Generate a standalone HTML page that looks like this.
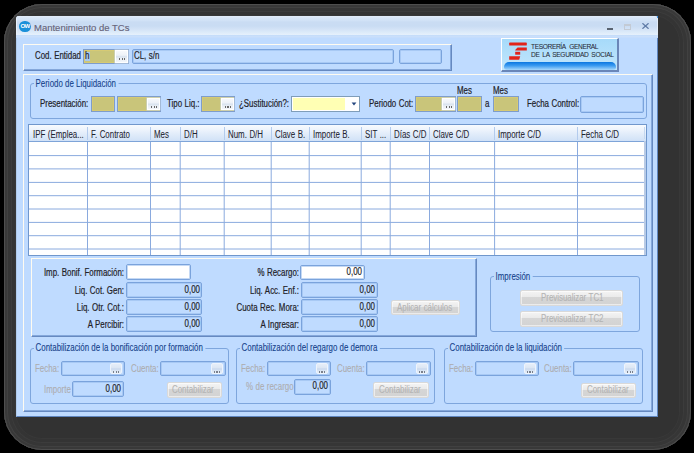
<!DOCTYPE html>
<html><head><meta charset="utf-8"><style>
*{margin:0;padding:0;box-sizing:border-box}
html,body{width:694px;height:453px;overflow:hidden;background:#000}
body{position:relative;font-family:"Liberation Sans",sans-serif;font-size:10px;line-height:11px;color:#222228}
div,span,svg{position:absolute}
.t{white-space:nowrap;word-spacing:0.4px;transform:scaleX(0.79);transform-origin:0 0;-webkit-text-stroke:0.2px currentColor}
.r{text-align:right;transform-origin:100% 0}
.nt{transform:none}
.dis{color:#adadb0;-webkit-text-stroke:0.1px #adadb0}
.gt{color:#15428b;background:#bfdbff;padding:0 3px 0 2px;word-spacing:0;-webkit-text-stroke:0.1px currentColor}
.grp{border:1px solid #7ea6dd;border-radius:3px}
.raised{border-top:1px solid #fffbf0;border-left:1px solid #fffbf0;border-right:1px solid #6689c0;border-bottom:1px solid #6689c0;box-shadow:inset -1px -1px 0 #85a8db}
.kh{background:#c9c57a;border:1px solid #7f9dca;box-shadow:inset 0 0 0 1px #d6ca74}
.fld{border:1px solid #7aa3dc;border-radius:2px;box-shadow:inset 0 0 0 1px rgba(150,185,235,.55)}
.b3{background:linear-gradient(#f7f9fc,#eef2f8 38%,#d8e2ee 52%,#e8eef5 68%,#f3f6fa);border:1px solid #fff;box-shadow:0 0 0 0.5px #c9d6e6}
.b3 i{position:absolute;left:3px;top:7px;width:6px;height:2px;background:repeating-linear-gradient(90deg,#6a6a6a 0 1.2px,transparent 1.2px 2.5px)}
.b3d{background:linear-gradient(#e6eef9,#dde7f4 40%,#cad9ee 55%,#dbe6f4 75%,#e4eefa);border:1px solid #eef4fc;border-radius:2px}
.b3d i{position:absolute;left:2px;top:7px;width:6px;height:2px;background:repeating-linear-gradient(90deg,#7a808c 0 1.3px,transparent 1.3px 2.5px)}
.db{background:linear-gradient(#f4f4f4,#eaeaea 45%,#d6d6d6 46%,#d3d3d3);border:1px solid #d9d9d9;border-radius:2px;color:#b2b2b2;text-align:center;box-shadow:inset 0 0 0 1px rgba(255,255,255,.55)}
.val{text-align:right}
</style></head><body>
<div style="left:4px;top:4px;width:687px;height:446px;border-radius:38px;box-shadow:inset 0 0 0 1px #4e4e4e,inset 0 0 0 3px #393939,inset 0 0 0 4px #414141,inset 0 0 0 7px #363636,inset 0 0 0 8px #3c3c3c,inset 0 0 0 11px #343434,inset 0 0 0 12px #383838;background:#323232"></div>
<div class="" style="left:16px;top:16px;width:642px;height:401px;background:#bfdbff;border-left:1px solid #b0cbed;border-right:1px solid #5f86bf;border-bottom:1px solid #5f86bf;border-radius:3px 3px 0 0"></div>
<div class="" style="left:16px;top:16px;width:642px;height:19px;border-radius:3px 3px 0 0;background:linear-gradient(#e4eefa 0px,#d8e6f8 2px,#d3e3f7 4px,#cadcf3 6px,#c9dcf3 10px,#d2e2f6 13px,#dceaf9 16px,#e6f1fc 19px);border-left:1px solid #e9f1fb;border-right:1px solid #e2ecf8"></div>
<div style="left:16px;top:35px;width:642px;height:3px;background:linear-gradient(#c3dcfa,#cadffb 50%,#c2dcfd)"></div>
<div style="left:657px;top:16px;width:1px;height:2px;background:#3a8ee0"></div>
<div style="left:19px;top:20.5px;width:11.8px;height:11.8px;border-radius:50%;background:#1a90d9"></div>
<div style="left:19px;top:23px;width:12px;font-size:6px;line-height:7px;color:#fff;text-align:center;font-weight:bold;letter-spacing:-0.6px">OW</div>
<div class="t nt" style="left:34px;top:21.5px;font-size:9.5px;line-height:12px;letter-spacing:0;word-spacing:0;color:#66647a;-webkit-text-stroke:0.15px #66647a">Mantenimiento de TCs</div>
<div style="left:607px;top:28px;width:6px;height:2px;background:#5a6472"></div>
<div style="left:624px;top:24px;width:7px;height:6px;border:1px solid #c3cad4;border-top-width:2px"></div>
<svg style="left:642px;top:23px" width="7" height="6" viewBox="0 0 7 6"><path d="M0.4 0.3 L6.6 5.7 M6.6 0.3 L0.4 5.7" stroke="#5f7aa6" stroke-width="1.3"/></svg>
<div class="raised" style="left:23px;top:44px;width:429px;height:27px;"></div>
<div class="t" style="left:35px;top:50px;">Cod. Entidad</div>
<div class="kh" style="left:83px;top:49px;width:46px;height:15px;"></div>
<div style="left:85px;top:52px;width:5px;height:9px;background:#a9c9ee"></div>
<div class="t" style="left:85px;top:50px;">h</div>
<div class="b3" style="left:115px;top:50px;width:13px;height:13px;"><i></i></div>
<div class="fld" style="left:132px;top:49px;width:262px;height:15px;"></div>
<div class="t" style="left:134px;top:50px;">CL, s/n</div>
<div class="fld" style="left:399px;top:49px;width:43px;height:15px;"></div>
<div class="" style="left:501px;top:38px;width:118px;height:34px;background:linear-gradient(#a6dafa,#c2e6fc);border-top:1px solid #fff;border-left:1px solid #fff;border-right:2px solid #6a86b8;border-bottom:2px solid #6a86b8"></div>
<div style="left:504px;top:62px;width:112px;height:8px;border-radius:5px 5px 3px 3px;background:linear-gradient(#0a76e0,#3a9af0 45%,#a8d8fb)"></div>
<svg style="left:508px;top:42px" width="20" height="19" viewBox="0 0 20 19"><rect x="1.2" y="0.6" width="17.6" height="3" rx="0.6" fill="#e2231a"/><path d="M9.6 5.4 H18.8 V8.4 H7.2 V7.9 Z" fill="#e2231a"/><rect x="7.2" y="9.8" width="5" height="2.9" fill="#e2231a"/><path d="M1.2 14.3 H12.2 L11.2 17.8 H1.2Z" fill="#e2231a"/></svg>
<div class="t nt" style="left:531px;top:42.5px;font-size:6.6px;line-height:8px;color:#262a36;letter-spacing:-0.36px;word-spacing:2.2px;-webkit-text-stroke:0.05px #262a36">TESORERÍA GENERAL</div>
<div class="t nt" style="left:531px;top:50.5px;font-size:6.6px;line-height:8px;color:#262a36;letter-spacing:-0.32px;word-spacing:1.3px;-webkit-text-stroke:0.05px #262a36">DE LA SEGURIDAD SOCIAL</div>
<div class="raised" style="left:23px;top:74px;width:630px;height:338px;"></div>
<div class="grp" style="left:30px;top:83px;width:617px;height:36px;"></div>
<div class="t gt" style="left:34px;top:78px">Periodo de Liquidación</div>
<div class="t" style="left:40px;top:98px;">Presentación:</div>
<div class="kh" style="left:91px;top:96px;width:24px;height:16px;"></div>
<div class="kh" style="left:117px;top:96px;width:44px;height:16px;"></div>
<div class="b3" style="left:147px;top:98px;width:13px;height:12px;"><i></i></div>
<div class="t" style="left:167px;top:98px;">Tipo Liq.:</div>
<div class="kh" style="left:201px;top:96px;width:34px;height:16px;"></div>
<div class="b3" style="left:221px;top:98px;width:13px;height:12px;"><i></i></div>
<div class="t" style="left:239px;top:98px;">¿Sustitución?:</div>
<div class="" style="left:291px;top:96px;width:69px;height:16px;background:#fff;border:1px solid #7f9db9"></div>
<div style="left:293px;top:98px;width:52px;height:12px;background:#ffffb4"></div>
<svg style="left:351px;top:102px" width="6" height="4" viewBox="0 0 6 4"><path d="M0.6 0.6 H5.4 L3 3.4Z" fill="#23457e"/></svg>
<div class="t" style="left:369px;top:98px;">Periodo Cot:</div>
<div class="kh" style="left:415px;top:96px;width:41px;height:16px;"></div>
<div class="b3" style="left:442px;top:98px;width:13px;height:12px;"><i></i></div>
<div class="kh" style="left:457px;top:96px;width:25px;height:16px;"></div>
<div class="t" style="left:485px;top:98px;">a</div>
<div class="kh" style="left:493px;top:96px;width:26px;height:16px;"></div>
<div class="t" style="left:457px;top:85px;">Mes</div>
<div class="t" style="left:493px;top:85px;">Mes</div>
<div class="t" style="left:527px;top:98px;">Fecha Control:</div>
<div class="fld" style="left:580px;top:96px;width:64px;height:17px;"></div>
<div class="" style="left:28px;top:124px;width:619px;height:132px;background:#fff;border:1px solid #7097cc"></div>
<div style="left:29px;top:125px;width:617px;height:17px;background:linear-gradient(#f8fbfe,#ebf2fc 35%,#dce9f9 70%,#d0e1f7);border-bottom:1px solid #7ea4d8"></div>
<svg style="left:0;top:0" width="694" height="453"><line x1="87.5" y1="127" x2="87.5" y2="140" stroke="#b3cbed" stroke-width="1"/><line x1="87.5" y1="142" x2="87.5" y2="255" stroke="#8aaade" stroke-width="1"/><line x1="150.5" y1="127" x2="150.5" y2="140" stroke="#b3cbed" stroke-width="1"/><line x1="150.5" y1="142" x2="150.5" y2="255" stroke="#8aaade" stroke-width="1"/><line x1="180.5" y1="127" x2="180.5" y2="140" stroke="#b3cbed" stroke-width="1"/><line x1="180.2" y1="142" x2="180.2" y2="255" stroke="#8aaade" stroke-width="1"/><line x1="224.5" y1="127" x2="224.5" y2="140" stroke="#b3cbed" stroke-width="1"/><line x1="224.2" y1="142" x2="224.2" y2="255" stroke="#8aaade" stroke-width="1"/><line x1="271.5" y1="127" x2="271.5" y2="140" stroke="#b3cbed" stroke-width="1"/><line x1="271.2" y1="142" x2="271.2" y2="255" stroke="#8aaade" stroke-width="1"/><line x1="309.5" y1="127" x2="309.5" y2="140" stroke="#b3cbed" stroke-width="1"/><line x1="309.2" y1="142" x2="309.2" y2="255" stroke="#8aaade" stroke-width="1"/><line x1="361.5" y1="127" x2="361.5" y2="140" stroke="#b3cbed" stroke-width="1"/><line x1="361.2" y1="142" x2="361.2" y2="255" stroke="#8aaade" stroke-width="1"/><line x1="390.5" y1="127" x2="390.5" y2="140" stroke="#b3cbed" stroke-width="1"/><line x1="390.2" y1="142" x2="390.2" y2="255" stroke="#8aaade" stroke-width="1"/><line x1="429.5" y1="127" x2="429.5" y2="140" stroke="#b3cbed" stroke-width="1"/><line x1="429.5" y1="142" x2="429.5" y2="255" stroke="#8aaade" stroke-width="1"/><line x1="494.5" y1="127" x2="494.5" y2="140" stroke="#b3cbed" stroke-width="1"/><line x1="494.6" y1="142" x2="494.6" y2="255" stroke="#8aaade" stroke-width="1"/><line x1="577.5" y1="127" x2="577.5" y2="140" stroke="#b3cbed" stroke-width="1"/><line x1="577.5" y1="142" x2="577.5" y2="255" stroke="#8aaade" stroke-width="1"/><line x1="644.5" y1="127" x2="644.5" y2="139" stroke="#c5d8f0" stroke-width="1"/><line x1="29" y1="155.6" x2="644" y2="155.6" stroke="#8aaade" stroke-width="1"/><line x1="29" y1="168.9" x2="644" y2="168.9" stroke="#8aaade" stroke-width="1"/><line x1="29" y1="182.4" x2="644" y2="182.4" stroke="#8aaade" stroke-width="1"/><line x1="29" y1="195.7" x2="644" y2="195.7" stroke="#8aaade" stroke-width="1"/><line x1="29" y1="209" x2="644" y2="209" stroke="#8aaade" stroke-width="1"/><line x1="29" y1="222.4" x2="644" y2="222.4" stroke="#8aaade" stroke-width="1"/><line x1="29" y1="235.7" x2="644" y2="235.7" stroke="#8aaade" stroke-width="1"/><line x1="29" y1="249" x2="644" y2="249" stroke="#8aaade" stroke-width="1"/><rect x="644" y="141" width="2" height="114" fill="#b9cbe6"/></svg>
<div class="t" style="left:33px;top:129px;-webkit-text-stroke:0.05px currentColor;color:#1e2430">IPF (Emplea...</div>
<div class="t" style="left:91px;top:129px;-webkit-text-stroke:0.05px currentColor;color:#1e2430">F. Contrato</div>
<div class="t" style="left:154px;top:129px;-webkit-text-stroke:0.05px currentColor;color:#1e2430">Mes</div>
<div class="t" style="left:184px;top:129px;-webkit-text-stroke:0.05px currentColor;color:#1e2430">D/H</div>
<div class="t" style="left:228px;top:129px;-webkit-text-stroke:0.05px currentColor;color:#1e2430">Num. D/H</div>
<div class="t" style="left:275px;top:129px;-webkit-text-stroke:0.05px currentColor;color:#1e2430">Clave B.</div>
<div class="t" style="left:313px;top:129px;-webkit-text-stroke:0.05px currentColor;color:#1e2430">Importe B.</div>
<div class="t" style="left:365px;top:129px;-webkit-text-stroke:0.05px currentColor;color:#1e2430">SIT ...</div>
<div class="t" style="left:394px;top:129px;-webkit-text-stroke:0.05px currentColor;color:#1e2430">Días C/D</div>
<div class="t" style="left:433px;top:129px;-webkit-text-stroke:0.05px currentColor;color:#1e2430">Clave C/D</div>
<div class="t" style="left:498px;top:129px;-webkit-text-stroke:0.05px currentColor;color:#1e2430">Importe C/D</div>
<div class="t" style="left:581px;top:129px;-webkit-text-stroke:0.05px currentColor;color:#1e2430">Fecha C/D</div>
<div class="raised" style="left:31px;top:258px;width:446px;height:79px;"></div>
<div class="t r" style="left:-76.5px;width:200px;top:267px;">Imp. Bonif. Formación:</div>
<div class="t r" style="left:-76.5px;width:200px;top:285px;">Liq. Cot. Gen:</div>
<div class="t r" style="left:-76.5px;width:200px;top:302px;">Liq. Otr. Cot.:</div>
<div class="t r" style="left:-76.5px;width:200px;top:319px;">A Percibir:</div>
<div class="fld" style="left:126px;top:264px;width:65px;height:16px;background:#fff"></div>
<div class="fld" style="left:126px;top:282px;width:76px;height:16px;"></div>
<div class="t r" style="left:-0.5px;width:200px;top:284px;">0,00</div>
<div class="fld" style="left:126px;top:299px;width:76px;height:16px;"></div>
<div class="t r" style="left:-0.5px;width:200px;top:301px;">0,00</div>
<div class="fld" style="left:126px;top:316px;width:76px;height:16px;"></div>
<div class="t r" style="left:-0.5px;width:200px;top:318px;">0,00</div>
<div class="t r" style="left:98.5px;width:200px;top:267px;">% Recargo:</div>
<div class="t r" style="left:98.5px;width:200px;top:285px;">Liq. Acc. Enf.:</div>
<div class="t r" style="left:98.5px;width:200px;top:302px;">Cuota Rec. Mora:</div>
<div class="t r" style="left:98.5px;width:200px;top:319px;">A Ingresar:</div>
<div class="fld" style="left:300px;top:265px;width:65px;height:15px;background:#fff"></div>
<div class="t r" style="left:161.5px;width:200px;top:266px;">0,00</div>
<div class="fld" style="left:301px;top:282px;width:77px;height:16px;"></div>
<div class="t r" style="left:174.5px;width:200px;top:284px;">0,00</div>
<div class="fld" style="left:301px;top:299px;width:77px;height:16px;"></div>
<div class="t r" style="left:174.5px;width:200px;top:301px;">0,00</div>
<div class="fld" style="left:301px;top:316px;width:77px;height:16px;"></div>
<div class="t r" style="left:174.5px;width:200px;top:318px;">0,00</div>
<div class="db" style="left:391px;top:300px;width:69px;height:15px;"></div>
<div class="t" style="left:397px;top:302px;color:#b4b4b4;-webkit-text-stroke:0.1px #b4b4b4">Aplicar cálculos</div>
<div class="grp" style="left:490px;top:276px;width:150px;height:56px;"></div>
<div class="t gt" style="left:494px;top:271px">Impresión</div>
<div class="db" style="left:520px;top:290px;width:103px;height:16px;"></div>
<div class="t" style="left:541px;top:292px;color:#b4b4b4;-webkit-text-stroke:0.1px #b4b4b4">Previsualizar TC1</div>
<div class="db" style="left:520px;top:311px;width:103px;height:16px;"></div>
<div class="t" style="left:541px;top:313px;color:#b4b4b4;-webkit-text-stroke:0.1px #b4b4b4">Previsualizar TC2</div>
<div class="grp" style="left:30px;top:348px;width:199px;height:56px;"></div>
<div class="t gt" style="left:34px;top:342px">Contabilización de la bonificación por formación</div>
<div class="t dis" style="left:35px;top:363px;">Fecha:</div>
<div class="fld" style="left:61px;top:361px;width:64px;height:15px;"></div>
<div class="b3d" style="left:110px;top:363px;width:12px;height:11px;"><i></i></div>
<div class="t dis" style="left:131px;top:363px;">Cuenta:</div>
<div class="fld" style="left:160px;top:361px;width:66px;height:15px;"></div>
<div class="b3d" style="left:211px;top:363px;width:12px;height:11px;"><i></i></div>
<div class="t dis" style="left:44px;top:384px;">Importe</div>
<div class="fld" style="left:72px;top:381px;width:52px;height:16px;"></div>
<div class="t r" style="left:-79.5px;width:200px;top:383px;">0,00</div>
<div class="db" style="left:167px;top:382px;width:55px;height:16px;"></div>
<div class="t" style="left:172px;top:384px;color:#b4b4b4;-webkit-text-stroke:0.1px #b4b4b4">Contabilizar</div>
<div class="grp" style="left:236px;top:348px;width:199px;height:56px;"></div>
<div class="t gt" style="left:240px;top:342px">Contabilización del regargo de demora</div>
<div class="t dis" style="left:241px;top:363px;">Fecha:</div>
<div class="fld" style="left:267px;top:361px;width:64px;height:15px;"></div>
<div class="b3d" style="left:316px;top:363px;width:12px;height:11px;"><i></i></div>
<div class="t dis" style="left:337px;top:363px;">Cuenta:</div>
<div class="fld" style="left:366px;top:361px;width:65px;height:15px;"></div>
<div class="b3d" style="left:416px;top:363px;width:12px;height:11px;"><i></i></div>
<div class="t dis" style="left:246px;top:381px;">% de recargo</div>
<div class="fld" style="left:294px;top:379px;width:37px;height:16px;"></div>
<div class="t r" style="left:127.5px;width:200px;top:380px;">0,00</div>
<div class="db" style="left:373px;top:382px;width:56px;height:16px;"></div>
<div class="t" style="left:379px;top:384px;color:#b4b4b4;-webkit-text-stroke:0.1px #b4b4b4">Contabilizar</div>
<div class="grp" style="left:444px;top:348px;width:199px;height:56px;"></div>
<div class="t gt" style="left:448px;top:342px">Contabilización de la liquidación</div>
<div class="t dis" style="left:449px;top:363px;">Fecha:</div>
<div class="fld" style="left:475px;top:361px;width:64px;height:15px;"></div>
<div class="b3d" style="left:524px;top:363px;width:12px;height:11px;"><i></i></div>
<div class="t dis" style="left:544px;top:363px;">Cuenta:</div>
<div class="fld" style="left:573px;top:361px;width:66px;height:15px;"></div>
<div class="b3d" style="left:624px;top:363px;width:12px;height:11px;"><i></i></div>
<div class="db" style="left:581px;top:383px;width:55px;height:15px;"></div>
<div class="t" style="left:587px;top:384px;color:#b4b4b4;-webkit-text-stroke:0.1px #b4b4b4">Contabilizar</div>
</body></html>
